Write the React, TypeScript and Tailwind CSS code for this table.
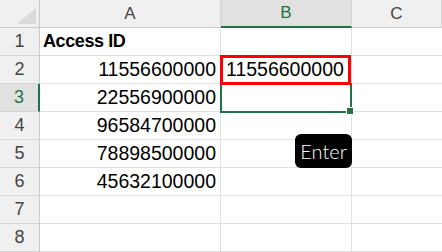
const rows: { n: number; a: string; b?: string; bold?: boolean }[] = [
  { n: 1, a: "Access ID", bold: true },
  { n: 2, a: "11556600000", b: "11556600000" },
  { n: 3, a: "22556900000" },
  { n: 4, a: "96584700000" },
  { n: 5, a: "78898500000" },
  { n: 6, a: "45632100000" },
  { n: 7, a: "" },
  { n: 8, a: "" },
];

const ACTIVE_ROW = 3;

function ColHeader({ label, active, className }: { label: string; active?: boolean; className: string }) {
  return (
    <div
      className={`${className} flex h-[28px] items-center justify-center border-r border-[#d4d4d4] text-[17px] ${
        active
          ? "bg-[#e1e1e1] text-[#217346] border-b-2 border-b-[#217346]"
          : "bg-[#f0f0f0] text-[#444] border-b border-b-[#c8c8c8]"
      }`}
    >
      {label}
    </div>
  );
}

export default function App() {
  return (
    <div
      className="relative h-[252px] w-[442px] overflow-hidden bg-white text-black"
      style={{ fontFamily: '"Liberation Sans", Arial, sans-serif' }}
    >
      {/* column headers */}
      <div className="flex">
        <div className="relative h-[28px] w-[40px] shrink-0 border-r border-b border-[#c8c8c8] bg-[#f0f0f0]">
          <svg className="absolute left-0 top-0" width="40" height="28">
            <polygon points="36,8 36,24 17,24" fill="#dadada" />
          </svg>
        </div>
        <ColHeader label="A" className="w-[181px] shrink-0" />
        <ColHeader label="B" active className="w-[131px] shrink-0" />
        <ColHeader label="C" className="flex-1" />
      </div>

      {rows.map((r) => {
        const active = r.n === ACTIVE_ROW;
        return (
          <div key={r.n} className="flex h-[28px]">
            <div
              className={`flex w-[40px] shrink-0 items-center justify-center border-b border-[#d4d4d4] text-[18px] ${
                active
                  ? "bg-[#e1e1e1] text-[#217346] border-r-2 border-r-[#217346]"
                  : "bg-[#f0f0f0] text-[#444] border-r border-r-[#c8c8c8]"
              }`}
            >
              {r.n}
            </div>
            <div
              className={`flex w-[181px] shrink-0 items-center border-r border-b border-[#e1e1e1] ${
                r.bold
                  ? "justify-start pl-[3px] text-[18px] font-bold tracking-[-0.4px]"
                  : "justify-end pr-[4px] text-[19.5px]"
              }`}
            >
              {r.a}
            </div>
            <div className="flex w-[131px] shrink-0 items-center border-r border-b border-[#e1e1e1] pl-[5px] text-[19.5px]">
              {r.b}
            </div>
            <div className="flex-1 border-b border-[#e1e1e1]" />
          </div>
        );
      })}

      {/* active cell B3 */}
      <div className="absolute left-[220px] top-[83px] h-[30px] w-[132px] border-2 border-[#217346]" />
      <div className="absolute left-[347px] top-[108px] h-[6px] w-[6px] bg-[#217346] outline outline-1 outline-white" />

      {/* highlighted copy in B2 */}
      <div className="absolute left-[220px] top-[55px] h-[30px] w-[131px] border-[3px] border-[#ff0000]" />

      {/* key hint */}
      <div
        className="absolute left-[295px] top-[134px] flex h-[34px] w-[57px] items-center justify-center rounded-[6px] bg-black text-[20px] font-light text-white"
        style={{ fontFamily: "Lato, sans-serif" }}
      >
        Enter
      </div>
    </div>
  );
}
